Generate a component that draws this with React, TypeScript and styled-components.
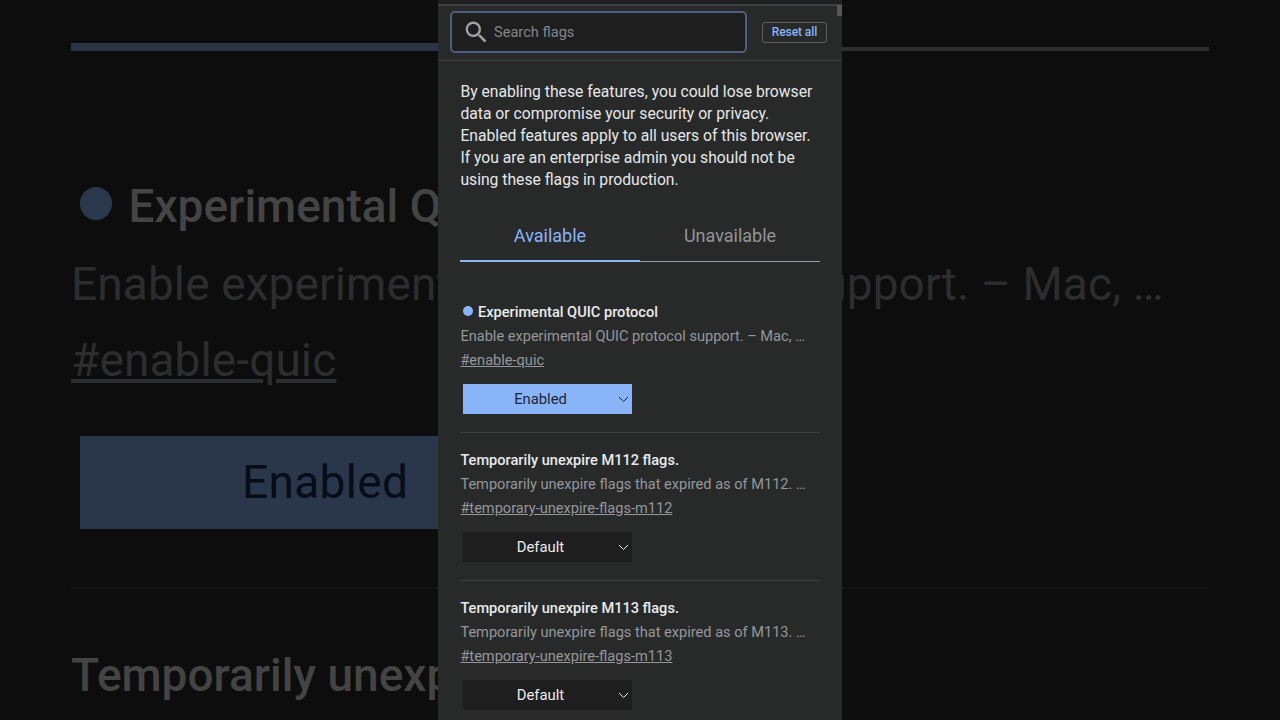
import React from 'react';
import styled, { createGlobalStyle } from 'styled-components';

const GlobalStyle = createGlobalStyle`
  * { box-sizing: border-box; }
  body { margin: 0; background: #0d0d0d; font-family: Roboto, "Liberation Sans", sans-serif; }
`;

const Stage = styled.div`
  display: grid;
  grid-template: 720px / 1280px;
  justify-items: center;
  overflow: hidden;
  background: #0d0d0d;
`;

/* Dimmed, enlarged copy of the first flag, behind the panel */
const Backdrop = styled.div`
  grid-area: 1 / 1;
  width: 1280px;
  height: 720px;
  overflow: hidden;
  padding: 43px 71px 0;
  white-space: nowrap;
`;

const BackdropTabs = styled.div`
  display: flex;
  align-items: flex-end;
  height: 8px;
`;

const BackdropTab = styled.div<{ $active?: boolean }>`
  flex: 1;
  height: ${(p) => (p.$active ? 8 : 4)}px;
  background: ${(p) => (p.$active ? '#2a3545' : '#2f2f2f')};
`;

const BackdropTitle = styled.div<{ $top: number }>`
  display: flex;
  align-items: center;
  margin-top: ${(p) => p.$top}px;
  height: 76px;
  font-size: 46px;
  font-weight: 500;
  color: #444;
`;

const BackdropDot = styled.span`
  width: 32px;
  height: 33px;
  margin: 0 16.5px 5px 9px;
  border-radius: 50%;
  background: #2a384e;
`;

const BackdropText = styled.div<{ $underline?: boolean }>`
  height: 76px;
  line-height: 80px;
  font-size: 46px;
  letter-spacing: 0.11px;
  color: #2c2d2e;
  text-decoration: ${(p) => (p.$underline ? 'underline' : 'none')};
`;

const BackdropSelect = styled.div`
  width: 536px;
  height: 93px;
  margin: 40px 0 0 9px;
  padding-left: 162px;
  line-height: 93px;
  font-size: 46px;
  letter-spacing: 0.35px;
  color: #060d18;
  background: #2a3649;
`;

const BackdropRule = styled.div`
  height: 2px;
  margin-top: 58px;
  background: #131414;
`;

const Panel = styled.main`
  grid-area: 1 / 1;
  position: relative;
  width: 404px;
  height: 720px;
  overflow: hidden;
  background: #282a2a;
`;

const TopStrip = styled.div`
  height: 6px;
  background: #1f1f20;
  border-bottom: 2px solid #3e3f42;
`;

const ScrollThumb = styled.div`
  position: absolute;
  top: 5px;
  right: 0;
  width: 5px;
  height: 11px;
  background: #555657;
`;

const Header = styled.header`
  display: flex;
  align-items: center;
  justify-content: space-between;
  height: 55px;
  padding: 0 15px 3px 12px;
  border-bottom: 1px solid #3e4043;
`;

const SearchBox = styled.div`
  display: flex;
  align-items: center;
  width: 297px;
  height: 42px;
  padding-left: 13px;
  gap: 7px;
  border: 2px solid #4e5f7e;
  border-radius: 5px;
  background: #1e1e1e;
  color: #858689;
  font-size: 14.6px;
`;

const SearchIcon = styled.svg`
  width: 22px;
  height: 22px;
  fill: #a0a1a4;
`;

const ResetButton = styled.button`
  width: 65px;
  height: 21px;
  margin-top: 1px;
  padding: 0;
  border: 1px solid #5e6063;
  border-radius: 3px;
  background: transparent;
  color: #8ab4f8;
  font: 500 12px/19px Roboto, sans-serif;
  letter-spacing: -0.08px;
`;

const Content = styled.section`
  padding: 20px 22px 0;
`;

const Warning = styled.p`
  margin: 0;
  padding-left: 0.4px;
  font-size: 15.7px;
  line-height: 22px;
  white-space: pre;
  color: #e6e7e9;
`;

const Tabs = styled.nav`
  display: flex;
  align-items: stretch;
  height: 53px;
  margin-top: 18px;
`;

const Tab = styled.div<{ $active?: boolean }>`
  flex: 1;
  display: flex;
  align-items: center;
  justify-content: center;
  font-size: 18px;
  color: ${(p) => (p.$active ? '#8ab4f8' : '#939599')};
  box-shadow: inset 0 ${(p) => (p.$active ? '-2px #8ab4f8' : '-1px #9aa0a6')};
`;

const Flag = styled.article<{ $first?: boolean }>`
  height: 148px;
  margin-top: ${(p) => (p.$first ? 23 : 0)}px;
  padding-top: 15px;
  border-bottom: 1px solid #3f4143;
  font-size: 14.58px;
  line-height: 24px;
  white-space: nowrap;
`;

const FlagTitle = styled.div`
  display: flex;
  align-items: center;
  height: 24px;
  padding-left: 0.4px;
  font-weight: 500;
  color: #e8eaed;
`;

const Dot = styled.span`
  width: 10px;
  height: 10px;
  margin: 0 5px 2px 2.6px;
  border-radius: 50%;
  background: #8ab4f8;
`;

const FlagText = styled.div`
  height: 24px;
  padding-left: 0.4px;
  color: #95979b;
`;

const FlagLink = styled.a`
  display: block;
  height: 24px;
  padding-left: 0.4px;
  color: #95979b;
  text-decoration: underline;
`;

const Select = styled.div<{ $on?: boolean }>`
  display: flex;
  align-items: center;
  width: 169px;
  height: 30px;
  margin: 12px 0 0 3px;
  padding-right: 3px;
  font-size: 14.8px;
  background: ${(p) => (p.$on ? '#8ab4f8' : '#1e1e1e')};
  color: ${(p) => (p.$on ? '#1c2637' : '#ececec')};
`;

const SelectLabel = styled.span`
  flex: 1;
  text-align: center;
`;

const Chevron = styled.svg`
  width: 11px;
  height: 7px;
  fill: none;
  stroke: currentColor;
`;

const flags = [
  { title: 'Experimental QUIC protocol', text: 'Enable experimental QUIC protocol support. – Mac, …', link: '#enable-quic', value: 'Enabled', on: true },
  { title: 'Temporarily unexpire M112 flags.', text: 'Temporarily unexpire flags that expired as of M112. …', link: '#temporary-unexpire-flags-m112', value: 'Default', on: false },
  { title: 'Temporarily unexpire M113 flags.', text: 'Temporarily unexpire flags that expired as of M113. …', link: '#temporary-unexpire-flags-m113', value: 'Default', on: false },
];

const warning = [
  'By enabling these features, you could lose browser',
  'data or compromise your security or privacy.',
  'Enabled features apply to all users of this browser.',
  'If you are an enterprise admin you should not be',
  'using these flags in production.',
].join('\n');

export default function App() {
  return (
    <>
      <GlobalStyle />
      <Stage>
        <Backdrop aria-hidden>
          <BackdropTabs>
            <BackdropTab $active />
            <BackdropTab />
          </BackdropTabs>
          <BackdropTitle $top={117}>
            <BackdropDot />
            Experimental Q
          </BackdropTitle>
          <BackdropText>{flags[0].text}</BackdropText>
          <BackdropText $underline>{flags[0].link}</BackdropText>
          <BackdropSelect>Enabled</BackdropSelect>
          <BackdropRule />
          <BackdropTitle $top={48}>Temporarily unexp</BackdropTitle>
        </Backdrop>
        <Panel>
          <TopStrip />
          <ScrollThumb />
          <Header>
            <SearchBox>
              <SearchIcon viewBox="2.5 2.5 18.5 18.5">
                <path d="M15.5 14h-.79l-.28-.27A6.471 6.471 0 0 0 16 9.5 6.5 6.5 0 1 0 9.5 16c1.61 0 3.09-.59 4.23-1.57l.27.28v.79l5 4.99L20.49 19l-4.99-5zm-6 0C7.01 14 5 11.99 5 9.5S7.01 5 9.5 5 14 7.01 14 9.5 11.99 14 9.5 14z" />
              </SearchIcon>
              Search flags
            </SearchBox>
            <ResetButton>Reset all</ResetButton>
          </Header>
          <Content>
            <Warning>{warning}</Warning>
            <Tabs>
              <Tab $active>Available</Tab>
              <Tab>Unavailable</Tab>
            </Tabs>
            {flags.map((f, i) => (
              <Flag key={f.link} $first={i === 0}>
                <FlagTitle>
                  {f.on && <Dot />}
                  {f.title}
                </FlagTitle>
                <FlagText>{f.text}</FlagText>
                <FlagLink>{f.link}</FlagLink>
                <Select $on={f.on}>
                  <SelectLabel>{f.value}</SelectLabel>
                  <Chevron viewBox="0 0 11 7">
                    <path d="M1 1l4.5 4.5L10 1" />
                  </Chevron>
                </Select>
              </Flag>
            ))}
          </Content>
        </Panel>
      </Stage>
    </>
  );
}
